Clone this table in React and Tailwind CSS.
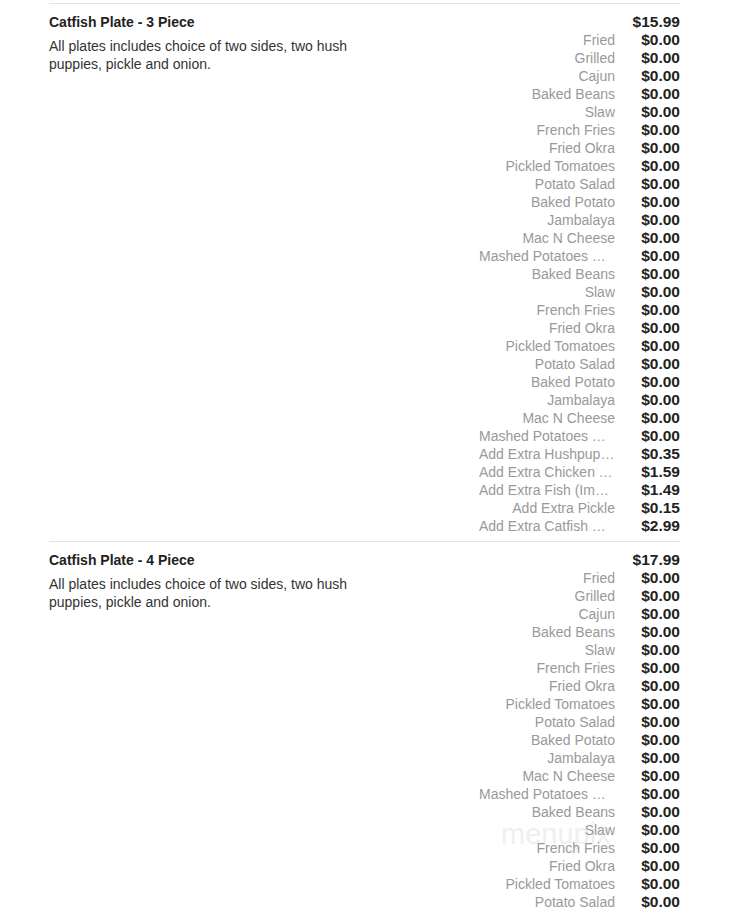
import React from 'react';

const sides = [
  'Fried', 'Grilled', 'Cajun', 'Baked Beans', 'Slaw', 'French Fries', 'Fried Okra',
  'Pickled Tomatoes', 'Potato Salad', 'Baked Potato', 'Jambalaya', 'Mac N Cheese',
  'Mashed Potatoes w/ Gravy', 'Baked Beans', 'Slaw', 'French Fries', 'Fried Okra',
  'Pickled Tomatoes', 'Potato Salad', 'Baked Potato', 'Jambalaya', 'Mac N Cheese',
  'Mashed Potatoes w/ Gravy',
];

const extras = [
  ['Add Extra Hushpuppies', '$0.35'],
  ['Add Extra Chicken Tender', '$1.59'],
  ['Add Extra Fish (Imported)', '$1.49'],
  ['Add Extra Pickle', '$0.15'],
  ['Add Extra Catfish Whole Fillet', '$2.99'],
];

const items = [
  {
    name: 'Catfish Plate - 3 Piece',
    price: '$15.99',
    options: [...sides.map((s) => [s, '$0.00']), ...extras],
  },
  {
    name: 'Catfish Plate - 4 Piece',
    price: '$17.99',
    options: [...sides.map((s) => [s, '$0.00']), ...extras],
  },
];

function PriceRow({ label, price }) {
  return (
    <div className="flex justify-end h-[18px] leading-[18px]">
      <span className="w-[136px] text-right truncate text-[14px] text-[#999]">{label}</span>
      <span className="w-[65px] text-right font-bold text-[15.5px] text-[#222]">{price}</span>
    </div>
  );
}

function MenuItem({ item }) {
  return (
    <div className="flex border-t border-[#e5e5e5] pt-[9px] pb-[6px]">
      <div className="w-[320px] shrink-0">
        <div className="font-bold text-[14px] leading-[18px] text-[#222]">{item.name}</div>
        <p className="mt-[6px] text-[14px] leading-[18px] text-[#333]">
          All plates includes choice of two sides, two hush puppies, pickle and onion.
        </p>
      </div>
      <div className="flex-1">
        <PriceRow label="" price={item.price} />
        {item.options.map(([label, price], i) => (
          <PriceRow key={i} label={label} price={price} />
        ))}
      </div>
    </div>
  );
}

export default function App() {
  return (
    <div
      className="relative bg-white w-[735px] h-[913px] overflow-hidden pt-[3px]"
      style={{ fontFamily: '"Liberation Sans", Arial, sans-serif' }}
    >
      <div className="absolute left-[501px] top-[813px] text-[29px] font-light text-[#efefef] pointer-events-none select-none">
        menupix
      </div>
      <div className="relative ml-[49px] w-[631px]">
        {items.map((item, i) => (
          <MenuItem key={i} item={item} />
        ))}
      </div>
    </div>
  );
}
